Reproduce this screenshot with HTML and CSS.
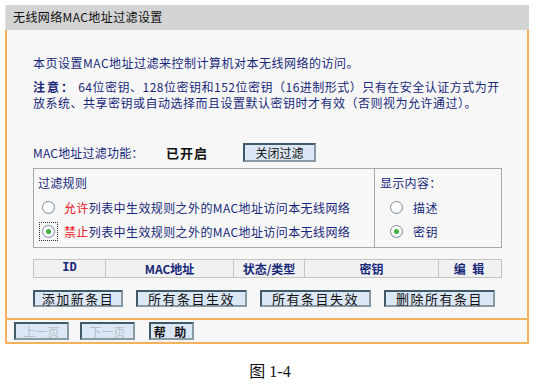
FILE: index.html
```html
<!DOCTYPE html>
<html lang="zh-CN">
<head>
    <meta charset="UTF-8">
    <meta name="viewport" content="width=device-width, initial-scale=1.0">
    <title>无线网络MAC地址过滤设置</title>
    <link rel="stylesheet" href="styles.css">
</head>
<body>

<div class="panel">
    <div class="title">无线网络MAC地址过滤设置</div>

    <div class="content">
        <!-- Intro text -->
        <p class="intro">本页设置MAC地址过滤来控制计算机对本无线网络的访问。</p>
        <p class="note"><strong>注意：</strong> 64位密钥、128位密钥和152位密钥（16进制形式）只有在安全认证方式为开<br>放系统、共享密钥或自动选择而且设置默认密钥时才有效（否则视为允许通过）。</p>

        <!-- Filter on/off -->
        <div class="status-row">
            <span class="status-label">MAC地址过滤功能：</span>
            <span class="status-value">已开启</span>
            <button class="btn btn-toggle">关闭过滤</button>
        </div>

        <!-- Rules and display options -->
        <div class="rules">
            <div class="rules-main">
                <div class="rules-head">过滤规则</div>
                <div class="radio-row">
                    <span class="radio"></span>
                    <span><em class="red">允许</em>列表中生效规则之外的MAC地址访问本无线网络</span>
                </div>
                <div class="radio-row">
                    <span class="radio-focus"><span class="radio checked"></span></span>
                    <span><em class="red">禁止</em>列表中生效规则之外的MAC地址访问本无线网络</span>
                </div>
            </div>
            <div class="rules-side">
                <div class="rules-head">显示内容：</div>
                <div class="radio-row">
                    <span class="radio"></span>
                    <span>描述</span>
                </div>
                <div class="radio-row">
                    <span class="radio checked"></span>
                    <span>密钥</span>
                </div>
            </div>
        </div>

        <!-- Entry list header -->
        <div class="list-head">
            <div class="col col-id">ID</div>
            <div class="col col-mac">MAC地址</div>
            <div class="col col-state">状态/类型</div>
            <div class="col col-key">密钥</div>
            <div class="col col-edit">编 辑</div>
        </div>

        <div class="actions">
            <button class="btn btn-add">添加新条目</button>
            <button class="btn btn-wide">所有条目生效</button>
            <button class="btn btn-wide">所有条目失效</button>
            <button class="btn btn-wide">删除所有条目</button>
        </div>
    </div>

    <!-- Paging -->
    <div class="pager">
        <button class="btn btn-page" disabled>上一页</button>
        <button class="btn btn-page" disabled>下一页</button>
        <button class="btn btn-help">帮 助</button>
    </div>
</div>

<p class="caption">图 1-4</p>

</body>
</html>
```

FILE: styles.css
```css
body {
    margin: 0;
    background: #fff;
    font-family: "Noto Sans CJK SC", "Noto Sans", sans-serif;
    font-size: 12px;
    color: #17287a;
}
.panel {
    width: 524px;
    margin: 5px 0 0 5px;
}
.title {
    height: 25px;
    line-height: 24px;
    padding-left: 7px;
    background: #d4d4d4;
    color: #111;
    letter-spacing: 0.4px;
    border-left: 1px solid #e4e4e4;
}
.content {
    background: #f7f7f7;
    border-left: 2px solid #f2b25c;
    border-right: 2px solid #f2b25c;
    padding: 25px 0 11px 26px;
}
.intro, .note {
    margin: 0;
    line-height: 16px;
    letter-spacing: 0.5px;
}
.note {
    margin-top: 8px;
}
.note strong {
    letter-spacing: 2px;
}
.status-row {
    display: flex;
    align-items: center;
    margin-top: 32px;
    height: 19px;
}
.status-label {
    width: 133px;
    letter-spacing: 0.2px;
}
.status-value {
    width: 77px;
    font-weight: bold;
    font-size: 13px;
    color: #111;
    letter-spacing: 1px;
}
.btn {
    font-family: "Noto Sans CJK SC", "Noto Sans", sans-serif;
    font-size: 12px;
    color: #111;
    background: #dbe7f5;
    border: 2px solid #3f5a68;
    border-right-color: #889aa5;
    border-bottom-color: #889aa5;
    padding: 0;
    line-height: 13px;
}
.btn-toggle {
    width: 73px;
    height: 19px;
}
.rules {
    display: flex;
    margin-top: 6px;
    width: 469px;
    height: 80px;
    border: 1px solid #a9a9a9;
    box-sizing: border-box;
    background: #f7f7f7;
}
.rules-main {
    width: 336px;
    padding-left: 4px;
    border-right: 1px solid #a9a9a9;
}
.rules-side {
    padding-left: 5px;
}
.rules-head {
    line-height: 16px;
    margin-top: 6px;
    height: 20px;
    letter-spacing: 0.3px;
}
.radio-row {
    display: flex;
    align-items: center;
    height: 24px;
    letter-spacing: 0.4px;
}
.rules-main .radio-row {
    gap: 9px;
    padding-left: 4px;
}
.rules-side .radio-row {
    gap: 10px;
    padding-left: 10px;
}
.red {
    font-style: normal;
    color: #e8141c;
}
.radio {
    width: 11px;
    height: 11px;
    border: 1px solid #7d8c9c;
    border-radius: 50%;
    background: radial-gradient(circle at 40% 40%, #fff 40%, #dfe3e8 100%);
    position: relative;
    flex: none;
}
.radio.checked::after {
    content: "";
    position: absolute;
    left: 3px;
    top: 3px;
    width: 5px;
    height: 5px;
    border-radius: 50%;
    background: #3fae3f;
}
.radio-focus {
    display: flex;
    padding: 2px;
    margin: -3px;
    border: 1px dotted #333;
}
.list-head {
    display: flex;
    margin-top: 11px;
    width: 469px;
    height: 19px;
    border: 1px solid #c4c4c4;
    box-sizing: border-box;
    background: #f1f1f1;
}
.col {
    text-align: center;
    line-height: 17px;
    font-weight: bold;
    border-right: 1px solid #c4c4c4;
}
.col-id {
    width: 71px;
    font-family: "Liberation Mono", monospace;
}
.col-mac { width: 127px; }
.col-state { width: 70px; }
.col-key { width: 133px; }
.col-edit {
    flex: 1;
    border-right: none;
    letter-spacing: 2px;
}
.actions {
    display: flex;
    gap: 13px;
    margin-top: 12px;
}
.actions .btn {
    height: 17px;
    letter-spacing: 1.5px;
    font-size: 13px;
}
.btn-add { width: 90px; }
.btn-wide { width: 111px; }
.pager {
    display: flex;
    gap: 11px;
    height: 26px;
    align-items: center;
    padding-left: 7px;
    background: #f7f7f7;
    border: 2px solid #f2b25c;
    box-sizing: border-box;
}
.btn-page {
    width: 55px;
    height: 18px;
    color: #b4bfc9;
}
.btn-help {
    width: 45px;
    height: 18px;
    margin-left: 3px;
    font-weight: bold;
    letter-spacing: 3px;
}
.caption {
    margin: 14px 0 0;
    text-align: center;
    font-family: "Liberation Serif", "Noto Sans CJK SC", serif;
    font-size: 16px;
    color: #111;
    padding-right: 4px;
}
```
